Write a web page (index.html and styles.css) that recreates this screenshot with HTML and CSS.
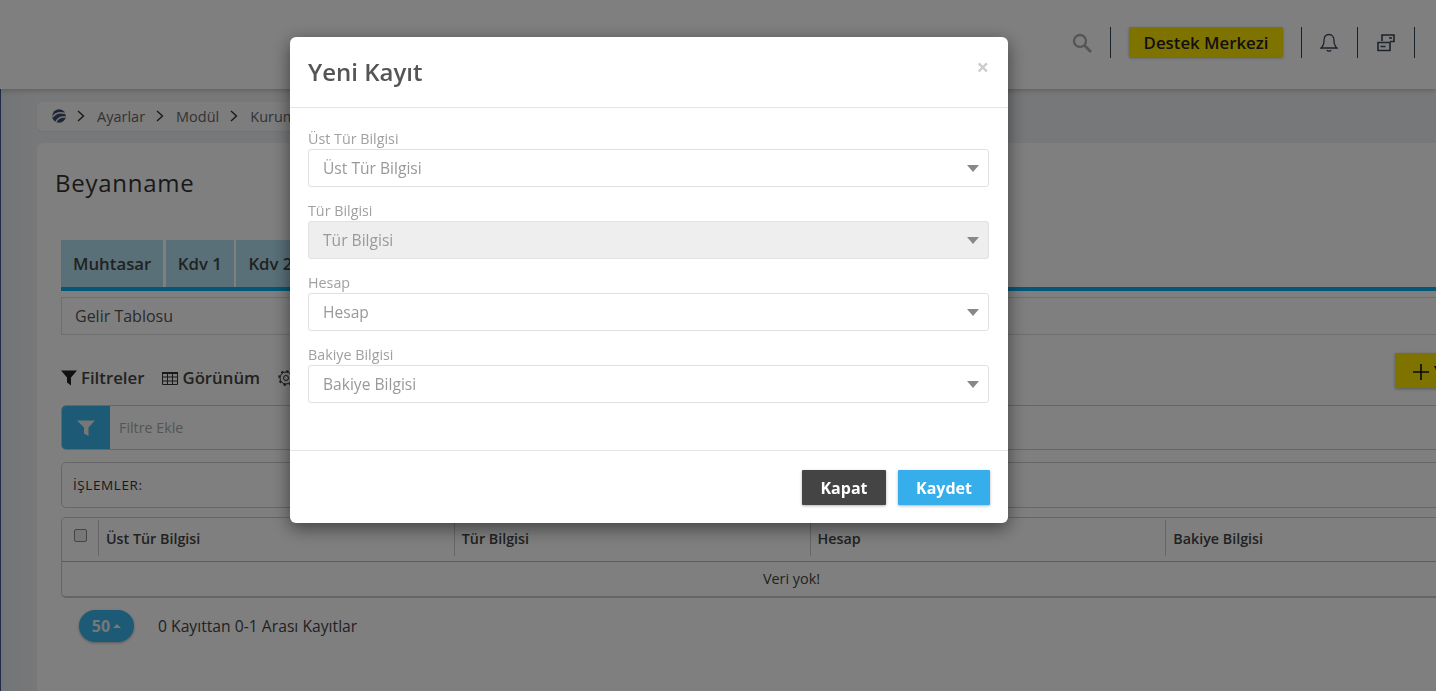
FILE: index.html
```html
<!DOCTYPE html>
<html lang="tr">
<head>
<meta charset="utf-8">
<title>Beyanname</title>
<link rel="stylesheet" href="styles.css">
</head>
<body>
<div class="page">
  <header class="topbar">
    <svg class="icon-search" viewBox="0 0 20 20" width="20" height="20"><circle cx="8" cy="8" r="6" fill="none" stroke="#aaa" stroke-width="2.300"/><path d="M12.5 12.5 19 19" stroke="#aaa" stroke-width="2.800" fill="none"/></svg>
    <span class="divider first"></span>
    <button class="support">Destek Merkezi</button>
    <span class="divider"></span>
    <svg class="icon-bell" viewBox="0 0 18 20" width="18" height="20"><path d="M9 1.500c-3.400 0-5 2.800-5 6 0 4-1.200 6-3 7.500h16c-1.800-1.500-3-3.500-3-7.500 0-3.200-1.600-6-5-6z M7 17c.4 1.400 3.600 1.400 4 0" fill="none" stroke="#3c4658" stroke-width="1.300"/></svg>
    <span class="divider"></span>
    <svg class="icon-panels" viewBox="0 0 18 20" width="18" height="20"><path d="M5 8V2h12v6.500H13M1 9.500h12v8H1zM3.500 13.500h5M12 5h3" fill="none" stroke="#3c4658" stroke-width="1.600"/></svg>
    <span class="divider"></span>
  </header>

  <main class="shell">
    <nav class="crumbs">
      <svg class="logo" viewBox="0 0 14 14" width="14" height="14"><circle cx="7" cy="7" r="6.800" fill="#3b4f6e"/><path d="M.5 8C4 3.500 8 2.800 13 4.500M4 13C5.500 9 9 7.500 13.500 8" fill="none" stroke="#f1f1f1" stroke-width="1.500"/></svg>
      <svg class="chev" viewBox="0 0 8 12" width="8" height="12"><path d="M1 1l5.500 5L1 11" fill="none" stroke="#333" stroke-width="1.400"/></svg>
      <span>Ayarlar</span>
      <svg class="chev" viewBox="0 0 8 12" width="8" height="12"><path d="M1 1l5.500 5L1 11" fill="none" stroke="#333" stroke-width="1.400"/></svg>
      <span>Modül</span>
      <svg class="chev" viewBox="0 0 8 12" width="8" height="12"><path d="M1 1l5.500 5L1 11" fill="none" stroke="#333" stroke-width="1.400"/></svg>
      <span>Kurum</span>
    </nav>

    <section class="card">
      <h1 class="card-title">Beyanname</h1>
      <div class="tabs">
        <div class="tab">Muhtasar</div>
        <div class="tab">Kdv 1</div>
        <div class="tab">Kdv 2</div>
      </div>
      <div class="report-select">Gelir Tablosu</div>
      <div class="toolbar">
        <div class="tool-links">
          <span class="tool">
            <svg viewBox="0 0 16 16" width="16" height="17"><path d="M0 1h16L10 8v8L6 13V8z" fill="#222"/></svg>Filtreler
          </span>
          <span class="tool">
            <svg viewBox="0 0 16 14" width="16" height="14"><path d="M.5 2.500h15v11H.5zM.5 6h15M.5 10h15M5.500 2.500v11M10.500 2.500v11" fill="none" stroke="#333" stroke-width="1"/><path d="M0 1h16v2H0z" fill="#333"/></svg>Görünüm
          </span>
          <svg class="gear" viewBox="0 0 16 16" width="16" height="16"><circle cx="8" cy="8" r="2.500" fill="none" stroke="#333"/><circle cx="8" cy="8" r="6" fill="none" stroke="#333" stroke-width="1"/><circle cx="8" cy="8" r="7" fill="none" stroke="#333" stroke-dasharray="2.500 3" stroke-width="1.500"/></svg>
        </div>
        <button class="add-btn"><svg viewBox="0 0 16 16" width="16" height="16"><path d="M8 0v16M0 8h16" stroke="#111" stroke-width="1.600"/></svg><span>Yeni Kayıt</span></button>
      </div>
      <div class="filter-bar">
        <span class="filter-btn"><svg viewBox="0 0 18 18" width="18" height="18"><path d="M0 1.500h18l-6.500 7V17L7 14.500v-6z" fill="#eee"/></svg></span>
        <span class="filter-text">Filtre Ekle</span>
      </div>
      <div class="actions">İŞLEMLER:</div>
      <div class="table">
        <div class="thead">
          <span class="check-cell"><span class="check"></span></span>
          <span class="th">Üst Tür Bilgisi</span>
          <span class="th">Tür Bilgisi</span>
          <span class="th">Hesap</span>
          <span class="th">Bakiye Bilgisi</span>
        </div>
        <div class="empty">Veri yok!</div>
      </div>
      <div class="pager">
        <span class="page-size">50<i class="up"></i></span>
        <span class="page-info">0 Kayıttan 0-1 Arası Kayıtlar</span>
      </div>
    </section>
  </main>
</div>

<div class="backdrop">
  <div class="modal">
    <div class="modal-head">
      <h2>Yeni Kayıt</h2>
      <span class="close">×</span>
    </div>
    <div class="modal-body">
      <div class="field"><label>Üst Tür Bilgisi</label><div class="select"><span>Üst Tür Bilgisi</span><i class="caret"></i></div></div>
      <div class="field"><label>Tür Bilgisi</label><div class="select disabled"><span>Tür Bilgisi</span><i class="caret"></i></div></div>
      <div class="field"><label>Hesap</label><div class="select"><span>Hesap</span><i class="caret"></i></div></div>
      <div class="field"><label>Bakiye Bilgisi</label><div class="select"><span>Bakiye Bilgisi</span><i class="caret"></i></div></div>
    </div>
    <div class="modal-foot">
      <button class="btn dark">Kapat</button>
      <button class="btn blue">Kaydet</button>
    </div>
  </div>
</div>
</body>
</html>
```
FILE: styles.css
```css
* { box-sizing: border-box; }
html, body { margin: 0; height: 100%; overflow: hidden; }
body { font-family: "Open Sans", sans-serif; color: #333; background: #f2f3f5; }
button { font-family: inherit; border: 0; cursor: pointer; }

.page { width: 1436px; height: 691px; overflow: hidden; display: flex; flex-direction: column; }

.topbar {
  height: 89px; flex: none; background: #fff; position: relative; z-index: 1;
  box-shadow: 0 1px 6px rgba(0,0,0,.25);
  display: flex; align-items: flex-start; padding: 27px 21px 0 0; justify-content: flex-end;
}
.icon-search { margin: 6px 18px 0 0; }
.divider { width: 1px; height: 31px; background: #34404f; }
.support {
  width: 154px; height: 30px; margin: 0 18px; padding: 0;
  background: #ffe600; color: #222; font-size: 16.8px; font-weight: 600;
  border-radius: 1px; box-shadow: 0 1px 3px rgba(0,0,0,.3);
}
.icon-bell { margin: 6px 19px 0 18px; }
.icon-panels { margin: 6px 19px 0 19px; }

.shell {
  flex: 1; width: 1600px; padding: 13px 0 0 36px;
  border-left: 1px solid #3c5a8a;
  background: linear-gradient(90deg, #e4e9ee 0, #eef1f4 37px);
}
.crumbs {
  height: 29px; width: 700px; display: flex; align-items: center; gap: 8px; padding: 0 0 1px 15px;
  background: #fbfbfb; border-radius: 5px; font-size: 14.5px; color: #666;
  box-shadow: 0 1px 2px rgba(0,0,0,.05);
}
.crumbs span { margin-right: 3px; }
.crumbs .logo { margin-right: 3px; }
.chev { margin-right: 4px; }

.card {
  margin-top: 12px; width: 1509px; height: 560px; padding: 0 24px;
  background: #fff; border-radius: 7px 0 0 0;
}
.card-title { margin: 0 0 0 -6px; padding-top: 23px; height: 97px; font-size: 24px; font-weight: 400; line-height: 33px; color: #333; letter-spacing: .75px; }
.tabs { display: flex; gap: 2.5px; height: 51px; border-bottom: 4px solid #0aaeee; }
.tab {
  height: 47px; padding: 0 12px; line-height: 47px; background: #b2e0f2;
  font-size: 16.8px; font-weight: 600; color: #444;
}
.report-select {
  margin-top: 6px; height: 38px; border: 1px solid #ddd; padding-left: 13px;
  font-size: 16px; line-height: 36px; color: #555;
}
.toolbar { height: 70px; margin-bottom: 0; display: flex; justify-content: space-between; align-items: flex-start; }
.tool-links { display: flex; align-items: center; padding-top: 31px; }
.tool { display: inline-flex; align-items: center; gap: 4px; font-size: 16.8px; font-weight: 600; color: #444; margin-right: 18px; }
.add-btn {
  margin-top: 18px; width: 127px; height: 35px; background: #ffe600; display: flex; align-items: center; gap: 5px;
  padding: 2px 0 0 18px; font-size: 16px; font-weight: 600; box-shadow: 0 1px 3px rgba(0,0,0,.3);
}

.filter-bar { height: 45px; border: 1px solid #ccc; border-radius: 5px; display: flex; align-items: center; overflow: hidden; }
.filter-btn { width: 48px; height: 100%; padding-right: 1px; background: #38b4ec; display: flex; align-items: center; justify-content: center; }
.filter-text { margin-left: 9px; font-size: 14.3px; color: #aaa; }
.actions {
  margin-top: 12px; height: 46px; border: 1px solid #ccc; border-radius: 5px; padding-left: 11px;
  font-size: 13.5px; font-weight: 500; line-height: 44px; letter-spacing: .6px; color: #333;
}
.table { margin-top: 9px; height: 81px; border: 1px solid #ccc; border-bottom-width: 2px; border-radius: 5px; }
.thead { height: 44px; display: flex; border-bottom: 1px solid #bbb; font-size: 14.3px; font-weight: 600; color: #444; }
.check-cell { width: 36px; flex: none; padding: 11px 0 0 12px; }
.check { display: block; width: 13px; height: 13px; background: #efefef; border: 1px solid #888; border-radius: 2px; }
.th { width: 356px; margin-top: 2px; height: 36px; padding: 9px 0 0 7px; border-left: 1px solid #ccc; line-height: 20px; }
.empty { height: 35px; text-align: center; font-size: 14.4px; line-height: 33px; color: #444; }

.pager { margin-top: 12px; padding-left: 18px; display: flex; align-items: center; gap: 24px; }
.page-size {
  width: 55px; height: 32px; border-radius: 16px; background: #38b4ec; color: #eee;
  font-size: 16px; font-weight: 700; display: flex; align-items: center; justify-content: center; gap: 3px;
  box-shadow: 0 1px 3px rgba(0,0,0,.3);
}
.up { width: 0; height: 0; border: 4px solid transparent; border-top: 0; border-bottom-color: #eee; }
.page-info { font-size: 15.7px; color: #444; }

.backdrop {
  position: fixed; inset: 0; background: rgba(0,0,0,.5); z-index: 10;
  display: flex; justify-content: flex-start; align-items: flex-start; padding: 37px 0 0 290px;
}
.modal {
  width: 718px; height: 486px; background: #fff; border-radius: 6px;
  box-shadow: 0 5px 18px rgba(0,0,0,.5); display: flex; flex-direction: column;
}
.modal-head { height: 71px; flex: none; border-bottom: 1px solid #e5e5e5; padding: 0 19px 2px 18px; display: flex; justify-content: space-between; align-items: center; }
.modal-head h2 { margin: 0; font-size: 24px; font-weight: 600; color: #555; }
.close { font-size: 22px; font-weight: 700; color: #ccc; line-height: 1; margin-top: -10px; }
.modal-body { flex: 1; padding: 21px 19px 0 18px; }
.field { height: 72px; }
.field label { display: block; height: 20px; font-size: 14.3px; line-height: 20px; color: #a0a0a0; }
.select {
  height: 38px; border: 1px solid #e1e1e1; border-radius: 3px; padding: 0 9px 0 14px;
  display: flex; align-items: center; justify-content: space-between; font-size: 15.6px; color: #999;
}
.select.disabled { background: #eee; }
.caret { width: 0; height: 0; border: 6.500px solid transparent; border-bottom: 0; border-top: 7px solid #888; }
.modal-foot { height: 73px; flex: none; border-top: 1px solid #e5e5e5; padding: 19px 18px 0 0; display: flex; justify-content: flex-end; gap: 12px; }
.btn { height: 35px; color: #fff; font-size: 16px; font-weight: 700; border-radius: 1px; box-shadow: 0 1px 3px rgba(0,0,0,.3); }
.btn.dark { width: 84px; background: #444; }
.btn.blue { width: 92px; background: #36aeec; }
```
